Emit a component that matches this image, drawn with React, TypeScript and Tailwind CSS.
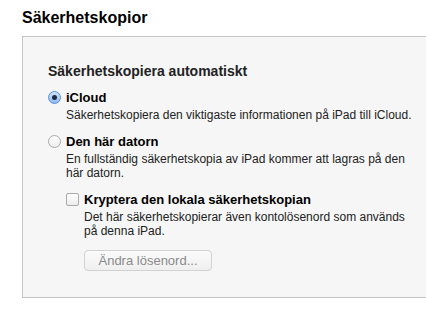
const Radio = ({ checked }: { checked?: boolean }) => (
  <span
    className={`mt-[1px] flex h-[13px] w-[13px] shrink-0 items-center justify-center rounded-full border ${
      checked
        ? "border-[#5b8fd6] bg-gradient-to-b from-[#cfe3fb] to-[#8fbaf0]"
        : "border-[#a9a9a9] bg-gradient-to-b from-white to-[#ececec]"
    }`}
  >
    {checked && <span className="h-[5px] w-[5px] rounded-full bg-[#1f2a44]" />}
  </span>
);

const Checkbox = () => (
  <span className="mt-[1px] h-[13px] w-[13px] shrink-0 rounded-[2px] border border-[#a9a9a9] bg-gradient-to-b from-white to-[#ececec]" />
);

export default function App() {
  return (
    <div className="h-[310px] w-[426px] overflow-hidden bg-white font-['Liberation_Sans',Arial,sans-serif] text-[12px] text-[#222]">
      <h1 className="pl-[22px] pt-[8px] text-[16px] font-bold leading-[19px] text-black">
        Säkerhetskopior
      </h1>

      <div className="ml-[22px] mt-[9px] h-[262px] w-[420px] border border-r-0 border-[#c6c6c6] bg-[#f6f6f6] pl-[25px] pt-[26px]">
        <h2 className="text-[14px] font-bold leading-[17px] text-[#222]">
          Säkerhetskopiera automatiskt
        </h2>

        <div className="mt-[10px] flex gap-[5px]">
          <Radio checked />
          <div>
            <div className="text-[13px] font-bold leading-[15px] text-black">iCloud</div>
            <p className="mt-[3px] leading-[14px]">
              Säkerhetskopiera den viktigaste informationen på iPad till iCloud.
            </p>
          </div>
        </div>

        <div className="mt-[12px] flex gap-[5px]">
          <Radio />
          <div>
            <div className="text-[13px] font-bold leading-[15px] text-black">Den här datorn</div>
            <p className="mt-[3px] w-[348px] leading-[14px]">
              En fullständig säkerhetskopia av iPad kommer att lagras på den här datorn.
            </p>

            <div className="mt-[12px] flex gap-[5px]">
              <Checkbox />
              <div>
                <div className="text-[13px] font-bold leading-[15px] text-black">
                  Kryptera den lokala säkerhetskopian
                </div>
                <p className="mt-[3px] w-[330px] leading-[14px]">
                  Det här säkerhetskopierar även kontolösenord som används på denna iPad.
                </p>
                <button className="mt-[12px] h-[21px] w-[128px] rounded-[4px] border border-[#d2d2d2] bg-gradient-to-b from-[#fbfbfb] to-[#efefef] text-[13px] text-[#8a8a8a]">
                  Ändra lösenord...
                </button>
              </div>
            </div>
          </div>
        </div>
      </div>
    </div>
  );
}
